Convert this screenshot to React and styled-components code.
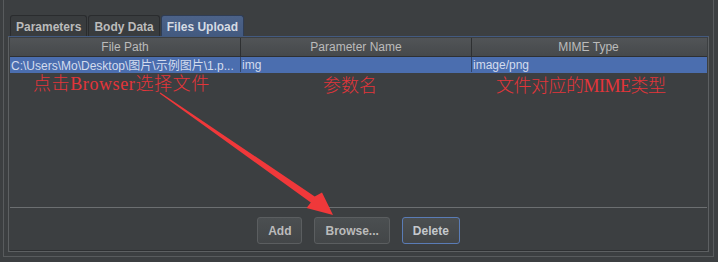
import React from 'react';
import styled, { createGlobalStyle } from 'styled-components';

const Global = createGlobalStyle`
  html, body {
    margin: 0;
    padding: 0;
    background: #3c3f41;
  }
  * { box-sizing: border-box; }
`;

const Frame = styled.div`
  position: relative;
  width: 718px;
  height: 262px;
  background: #3c3f41;
  font-family: "Liberation Sans", Arial, sans-serif;
  overflow: hidden;
`;

const Window = styled.div`
  margin-left: 3px;
  width: 711px;
  height: 257px;
  border-left: 1px solid #585b5d;
  border-right: 1px solid #585b5d;
  border-bottom: 1px solid #585b5d;
  padding: 15px 4px 0 4px;
`;

const TabRow = styled.div`
  display: flex;
  gap: 1px;
  height: 21px;
  padding-left: 2px;
`;

const Tab = styled.div`
  display: flex;
  align-items: center;
  padding: 1px 5px 0;
  font-size: 12px;
  font-weight: bold;
  color: ${p => (p.active ? '#d6dbe3' : '#bbbbbb')};
  background: ${p => (p.active ? 'linear-gradient(#4c6288, #435a80)' : '#393c3e')};
  border: 1px solid ${p => (p.active ? '#2f3d55' : '#2a2c2e')};
  border-bottom: none;
  border-radius: 3px 3px 0 0;
`;

const TabBody = styled.div`
  height: 216px;
  border: 1px solid #5d6062;
  border-top-color: #435a80;
  padding: 1px 1px 0;
  display: flex;
  flex-direction: column;
`;

const TableScroll = styled.div`
  height: 170px;
  border-bottom: 1px solid #6c6f71;
  background: #3c3f41;
`;

const Row = styled.div`
  display: grid;
  grid-template-columns: 231px 231px 233px;
  height: ${p => (p.head ? '19px' : '16px')};
  background: ${p => (p.head ? 'linear-gradient(#515457, #46494b)' : '#4b6eaf')};
  border-bottom: 1px solid ${p => (p.head ? '#2e3032' : '#4b6eaf')};
`;

const Cell = styled.div`
  display: flex;
  align-items: center;
  justify-content: ${p => (p.head ? 'center' : 'flex-start')};
  padding: 0 1px;
  font-size: 12px;
  color: ${p => (p.head ? '#bbbbbb' : '#d3dcee')};
  border-right: 1px solid ${p => (p.head ? '#2e3032' : '#34466a')};
  white-space: nowrap;
  overflow: hidden;
  min-width: 0;
  font-family: "Liberation Sans", "Noto Sans CJK SC", sans-serif;
  &:last-child { border-right: none; }
`;

const ButtonBar = styled.div`
  display: flex;
  justify-content: center;
  align-items: flex-start;
  gap: 12px;
  padding-top: 9px;
  flex: 1;
  border-bottom: 1px solid #2e3032;
`;

const Button = styled.div`
  height: 27px;
  display: flex;
  align-items: center;
  padding: 0 10px;
  font-size: 12px;
  font-weight: bold;
  color: ${p => (p.focused ? '#c4c8cc' : '#bbbbbb')};
  background: linear-gradient(#4b4f51, #434648);
  border: 1px solid ${p => (p.focused ? '#5a7cb6' : '#5b5e60')};
  border-radius: 3px;
`;

const Overlay = styled.div`
  position: absolute;
  inset: 0;
  pointer-events: none;
`;

const Note = styled.div`
  position: absolute;
  left: ${p => p.x}px;
  top: ${p => p.y}px;
  font-family: "Liberation Serif", "Noto Sans CJK SC", serif;
  font-size: 18px;
  font-weight: 300;
  line-height: 20px;
  letter-spacing: ${p => p.spacing || 0}px;
  color: #e3353a;
  white-space: nowrap;
`;

const Arrow = styled.svg`
  position: absolute;
  left: 0;
  top: 0;
`;

export default function App() {
  return (
    <Frame>
      <Global />
      <Window>
        <TabRow>
          <Tab>Parameters</Tab>
          <Tab>Body Data</Tab>
          <Tab active>Files Upload</Tab>
        </TabRow>
        <TabBody>
          <TableScroll>
            <Row head>
              <Cell head>File Path</Cell>
              <Cell head>Parameter Name</Cell>
              <Cell head>MIME Type</Cell>
            </Row>
            <Row>
              <Cell>C:\Users\Mo\Desktop\图片\示例图片\1.p...</Cell>
              <Cell>img</Cell>
              <Cell>image/png</Cell>
            </Row>
          </TableScroll>
          <ButtonBar>
            <Button>Add</Button>
            <Button>Browse...</Button>
            <Button focused>Delete</Button>
          </ButtonBar>
        </TabBody>
      </Window>
      <Overlay>
        <Note x={33} y={74} spacing={0.6}>点击Browser选择文件</Note>
        <Note x={323} y={76}>参数名</Note>
        <Note x={496} y={76} spacing={-0.5}>文件对应的MIME类型</Note>
        <Arrow width="718" height="262" viewBox="0 0 718 262">
          <polygon
            points="160.3,92.4 314.7,196.5 322,192.5 333,215 306.5,208 310.8,202.5 159.7,93.6"
            fill="#f0383a"
          />
        </Arrow>
      </Overlay>
    </Frame>
  );
}
